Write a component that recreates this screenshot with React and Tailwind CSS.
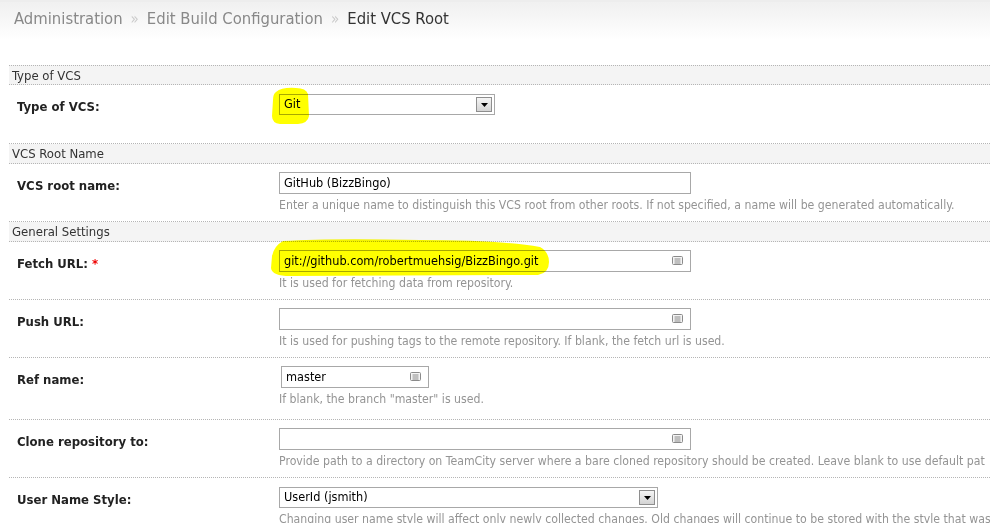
import React from "react";

const FONT = "font-['DejaVu_Sans_Condensed','DejaVu_Sans',sans-serif]";

function NoteIcon() {
    return (
        <svg width="11" height="9" viewBox="0 0 11 9" className="absolute right-[7px] top-[5px]">
            <rect x="0.5" y="0.5" width="10" height="8" rx="1" fill="#f4f4f4" stroke="#8a8a8a" />
            <line x1="2.5" y1="3" x2="8.5" y2="3" stroke="#8a8a8a" />
            <line x1="2.5" y1="5" x2="8.5" y2="5" stroke="#8a8a8a" />
            <line x1="2.5" y1="7" x2="8.5" y2="7" stroke="#8a8a8a" />
        </svg>
    );
}

function TextBox({ value, width, icon }) {
    return (
        <div
            className="relative h-[22px] border border-[#a8a8a8] bg-white pl-[4px] text-[12.6px] leading-[20px] text-black"
            style={{ width }}
        >
            {value}
            {icon && <NoteIcon />}
        </div>
    );
}

function SelectBox({ value, width }) {
    return (
        <div
            className="mt-[1px] flex h-[21px] items-center border border-[#a8a8a8] bg-white pl-[4px] pr-[2px] text-[12.6px] text-black"
            style={{ width }}
        >
            <span className="flex-1">{value}</span>
            <span className="flex h-[15px] w-[16px] items-center justify-center border border-[#8e8e8e] bg-gradient-to-b from-[#f5f5f5] to-[#d4d4d4]">
                <svg width="7" height="4" viewBox="0 0 7 4">
                    <path d="M0 0h7L3.5 4z" fill="#000" />
                </svg>
            </span>
        </div>
    );
}

function Section({ title, first }) {
    return (
        <div
            className={`h-[20px] border-b border-dotted border-[#b5b5b5] bg-[#f4f4f4] pl-[3px] text-[13px] leading-[19px] text-[#333] ${
                first ? "border-t" : ""
            }`}
        >
            {title}
        </div>
    );
}

function Row({ label, required, hint, h = "h-[58px]", children }) {
    return (
        <div className={`flex ${h} border-b border-dotted border-[#b5b5b5]`}>
            <div className="w-[262px] shrink-0 pl-[8px] pt-[14px] text-[13px] font-bold leading-[15px] text-[#222]">
                {label}
                {required && <span className="text-[#e00]"> *</span>}
            </div>
            <div className="flex-1 whitespace-nowrap pl-[8px] pt-[8px]">
                {children}
                {hint && <div className="mt-[3px] text-[12.2px] leading-[16px] text-[#949494]">{hint}</div>}
            </div>
        </div>
    );
}

export default function App() {
    return (
        <div className={`relative h-[523px] w-[990px] overflow-hidden bg-white ${FONT}`}>
            {/* breadcrumb header */}
            <div className="h-[40px] border-t-2 border-[#ededed] bg-gradient-to-b from-[#f0f0f0] to-white pl-[14px] pt-[6px] text-[16.5px] leading-[22px]">
                <span className="text-[#888]">Administration</span>
                <span className="mx-[8px] text-[15px] text-[#cacaca]">»</span>
                <span className="text-[#888]">Edit Build Configuration</span>
                <span className="mx-[8px] text-[15px] text-[#cacaca]">»</span>
                <span className="text-[#333]">Edit VCS Root</span>
            </div>

            <div className="ml-[9px] mt-[25px]">
                <Section title="Type of VCS" first />
                <Row label="Type of VCS:" h="h-[59px]">
                    <SelectBox value="Git" width={216} />
                </Row>
                <Section title="VCS Root Name" />
                <Row
                    label="VCS root name:"
                    hint="Enter a unique name to distinguish this VCS root from other roots. If not specified, a name will be generated automatically."
                >
                    <TextBox value="GitHub (BizzBingo)" width={412} />
                </Row>
                <Section title="General Settings" />
                <Row label="Fetch URL:" required hint="It is used for fetching data from repository.">
                    <TextBox value="git://github.com/robertmuehsig/BizzBingo.git" width={412} icon />
                </Row>
                <Row label="Push URL:" hint="It is used for pushing tags to the remote repository. If blank, the fetch url is used.">
                    <TextBox value="" width={412} icon />
                </Row>
                <Row label="Ref name:" h="h-[62px]" hint={'If blank, the branch "master" is used.'}>
                    <div className="pl-[2px]">
                        <TextBox value="master" width={148} icon />
                    </div>
                </Row>
                <Row
                    label="Clone repository to:"
                    hint="Provide path to a directory on TeamCity server where a bare cloned repository should be created. Leave blank to use default pat"
                >
                    <TextBox value="" width={412} icon />
                </Row>
                <Row
                    label="User Name Style:"
                    hint="Changing user name style will affect only newly collected changes. Old changes will continue to be stored with the style that was"
                >
                    <SelectBox value="UserId (jsmith)" width={379} />
                </Row>
            </div>

            {/* marker highlights */}
            <svg className="pointer-events-none absolute left-0 top-0 mix-blend-multiply" width="990" height="523">
                <path
                    d="M276 92 Q282 87 296 88 Q306 88 308 94 L309 116 Q308 123 298 124 L280 124 Q272 123 272 116 L273 100 Q273 94 276 92 Z"
                    fill="#ffff00"
                />
                <path
                    d="M283 241 Q330 238 420 240 Q500 240 540 247 Q549 252 549 262 Q549 273 538 275 L290 276 Q272 276 271 268 L272 256 Q274 246 283 241 Z"
                    fill="#ffff00"
                />
            </svg>
        </div>
    );
}
